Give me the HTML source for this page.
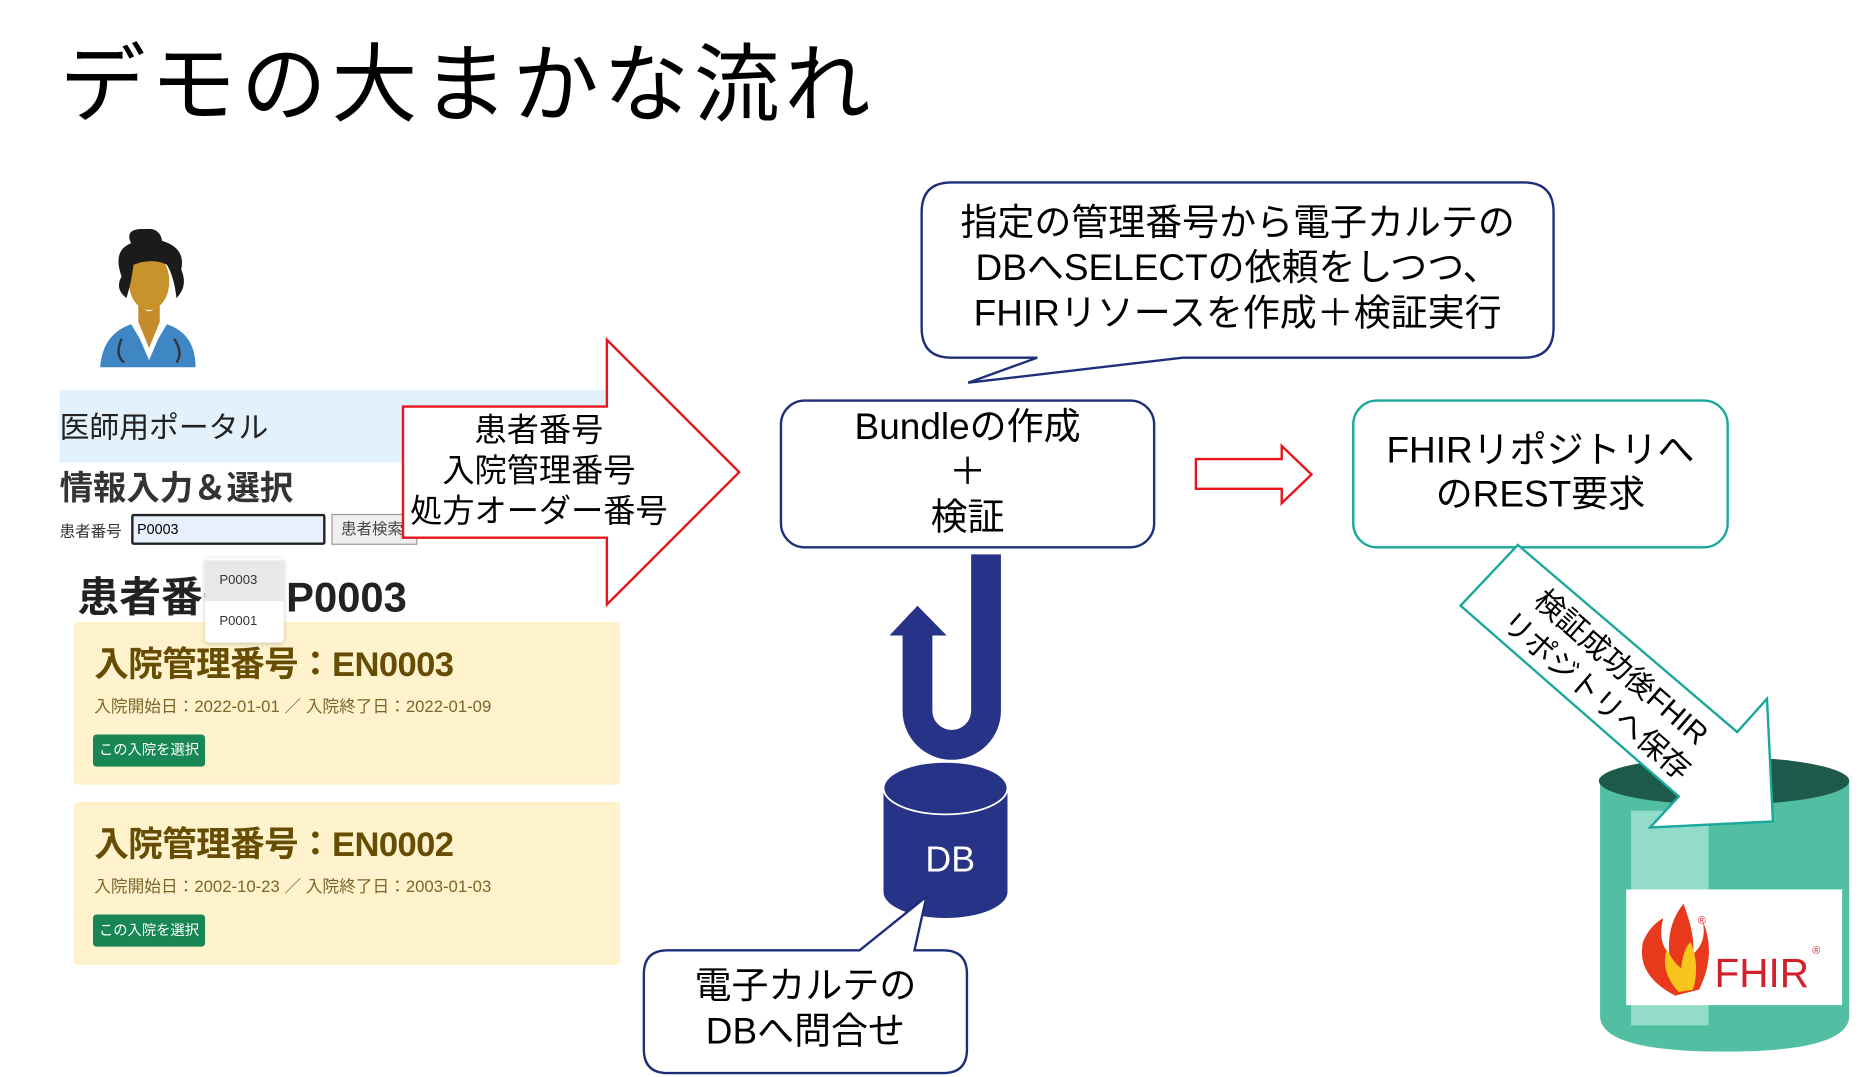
<!DOCTYPE html>
<html><head><meta charset="utf-8"><style>
*{margin:0;padding:0;box-sizing:border-box}
html,body{width:1860px;height:1076px;overflow:hidden;background:#fff}
#w{position:absolute;left:0;top:0;width:1560px;height:903px;transform:scale(1.1923);transform-origin:0 0;font-family:"Liberation Sans","Noto Sans CJK JP",sans-serif;color:#000}
.a{position:absolute}
.c{text-align:center;white-space:nowrap}
.card{position:absolute;left:62px;width:458px;height:136px;background:#fff3cd;border:1px solid #ffeeba;border-radius:3px}
.card h2{position:absolute;left:16px;top:11px;font-size:29px;font-weight:bold;color:#664d03;white-space:nowrap;letter-spacing:-0.5px}
.card p{position:absolute;left:16px;top:59px;font-size:14px;color:#7a6628;white-space:nowrap}
.card b{position:absolute;left:15px;top:93px;width:94px;height:27px;background:#198754;border-radius:3px;color:#fff;font-size:12px;font-weight:normal;line-height:27px;text-align:center}
</style></head><body><div id="w">
<div class="a" style="left:50px;top:12px;font-size:72px;letter-spacing:4px;font-family:'Noto Sans CJK JP',sans-serif;font-weight:400;white-space:nowrap">デモの大まかな流れ</div>

<svg class="a" style="left:80px;top:192px" width="90" height="120" viewBox="0 0 90 120">
<path d="M4 116 Q6 88 30 80 L45 105 L60 80 Q84 88 84 116 Z" fill="#3f86c4"/>
<path d="M32 80 L45 110 L58 80 L52 78 L45 95 L38 78Z" fill="#fff"/>
<path d="M36 60 Q45 78 54 60 L54 78 L45 100 L36 78Z" fill="#c58b2a"/>
<ellipse cx="45" cy="44" rx="17" ry="24" fill="#c8932b"/>
<path d="M22 40 Q14 18 30 12 Q24 0 40 0 Q54 -2 56 10 Q76 16 72 34 Q78 48 68 58 Q66 40 60 30 Q48 24 32 30 Q30 46 26 58 Q16 50 22 40Z" fill="#1b1b1b"/>
<path d="M22 92 Q16 106 24 112 M66 92 Q74 104 68 112" stroke="#333" stroke-width="2" fill="none"/>
</svg>

<div class="a" style="left:50px;top:327px;width:460px;height:61px;background:#e3f1fc"></div>
<div class="a" style="left:50px;top:339px;font-size:25px;color:#222;white-space:nowrap">医師用ポータル</div>
<div class="a" style="left:50px;top:388px;font-size:28px;font-weight:bold;color:#333;white-space:nowrap">情報入力＆選択</div>
<div class="a" style="left:50px;top:435px;font-size:13px;color:#333;white-space:nowrap">患者番号</div>
<div class="a" style="left:110px;top:431px;width:163px;height:26px;border:2px solid #222;border-radius:2px;background:#e8f0fe;font-size:12px;line-height:22px;padding-left:3px">P0003</div>
<div class="a" style="left:278px;top:431px;width:72px;height:26px;border:1px solid #999;background:#efefef;font-size:13px;line-height:24px;padding-left:7px;color:#444;overflow:hidden;white-space:nowrap">患者検索</div>
<div class="a" style="left:65px;top:473px;font-size:35px;font-weight:bold;color:#222;white-space:nowrap">患者番号：P0003</div>
<div class="card" style="top:522px"><h2>入院管理番号：EN0003</h2><p>入院開始日：2022-01-01 ／ 入院終了日：2022-01-09</p><b>この入院を選択</b></div>
<div class="card" style="top:673px"><h2>入院管理番号：EN0002</h2><p>入院開始日：2002-10-23 ／ 入院終了日：2003-01-03</p><b>この入院を選択</b></div>
<div class="a" style="left:172px;top:468px;width:66px;height:71px;background:#fff;border-radius:3px;box-shadow:0 1px 4px rgba(0,0,0,.2)">
<div style="height:34px;background:#e8e8e8;font-size:11px;line-height:34px;padding-left:12px;color:#333;margin-top:2px">P0003</div>
<div style="font-size:11px;line-height:34px;padding-left:12px;color:#333">P0001</div></div>

<svg class="a" style="left:0;top:0" width="1560" height="903">
<polygon points="338,341 509,341 509,285 620,396 509,507 509,451 338,451" fill="#fff" stroke="#e8141c" stroke-width="2"/>
<polygon points="1003,385 1075,385 1075,374 1100,398 1075,422 1075,410 1003,410" fill="#fff" stroke="#e8141c" stroke-width="2"/>
<path d="M798,153 H1278 Q1303,153 1303,178 V275 Q1303,300 1278,300 H992 L812,321 L870,300 H798 Q773,300 773,275 V178 Q773,153 798,153Z" fill="#fff" stroke="#1f2e7a" stroke-width="2"/>
<rect x="655" y="336" width="313" height="123" rx="20" fill="#fff" stroke="#1f2e7a" stroke-width="2"/>
<rect x="1135" y="336" width="314" height="123" rx="20" fill="#fff" stroke="#1aa89a" stroke-width="2"/>
<path d="M827,465 V596 A28.75,28.75 0 0 1 769.5,596 V530" stroke="#273386" stroke-width="25" fill="none"/>
<polygon points="746,533 769.5,508 794,533" fill="#273386"/>
<path d="M741,661 V748 A52,22 0 0 0 845,748 V661Z" fill="#273386"/>
<ellipse cx="793" cy="661" rx="52" ry="22" fill="#273386" stroke="#fff" stroke-width="1.5"/>
<text x="797" y="731" font-size="30" fill="#fff" text-anchor="middle" font-family="Liberation Sans">DB</text>
<path d="M560,797 H721 L777,752 L767,797 H791 Q811,797 811,817 V880 Q811,900 791,900 H560 Q540,900 540,880 V817 Q540,797 560,797Z" fill="#fff" stroke="#1f2e7a" stroke-width="2"/>
<path d="M1342,655 V852 Q1342,882 1446,882 Q1551,882 1551,852 V655Z" fill="#52bfa3"/>
<rect x="1368" y="680" width="65" height="180" fill="#93dcca"/>
<ellipse cx="1446" cy="655" rx="105" ry="20" fill="#1e5a4a"/>
<rect x="1364" y="746" width="181" height="97" fill="#fff"/>
<path d="M1405,835 Q1372,818 1378,790 Q1384,776 1395,770 Q1390,790 1400,800 Q1398,775 1412,758 Q1422,785 1420,800 Q1432,790 1428,772 Q1440,800 1425,830 Z" fill="#e8391c"/>
<path d="M1408,832 Q1392,815 1398,796 Q1404,808 1410,812 Q1412,795 1418,790 Q1426,810 1420,830Z" fill="#f7c51c"/>
<text x="1438" y="828" font-size="34" fill="#d31f2a" font-family="Liberation Sans">FHIR</text>
<text x="1424" y="775" font-size="9" fill="#d31f2a">®</text><text x="1520" y="800" font-size="9" fill="#d31f2a">®</text>
<polygon points="1273,457 1225,508 1408,668 1384,694 1487,689 1482,586 1457,614" fill="#fff" stroke="#1aa89a" stroke-width="2"/>
</svg>

<div class="a c" style="left:334px;top:344px;width:236px;font-size:27px;line-height:34px">患者番号<br>入院管理番号<br>処方オーダー番号</div>
<div class="a c" style="left:773px;top:168px;width:530px;font-size:31px;line-height:38px">指定の管理番号から電子カルテの<br>DBへSELECTの依頼をしつつ、<br>FHIRリソースを作成＋検証実行</div>
<div class="a c" style="left:655px;top:339px;width:313px;font-size:31px;line-height:38px">Bundleの作成<br>＋<br>検証</div>
<div class="a c" style="left:1135px;top:359px;width:314px;font-size:31px;line-height:37px">FHIRリポジトリへ<br>のREST要求</div>
<div class="a c" style="left:540px;top:808px;width:271px;font-size:31px;line-height:38px">電子カルテの<br>DBへ問合せ</div>
<div class="a c" style="left:1204px;top:540px;width:290px;font-size:25px;line-height:32px;transform:rotate(41deg)">検証成功後FHIR<br>リポジトリへ保存</div>
</div></body></html>
